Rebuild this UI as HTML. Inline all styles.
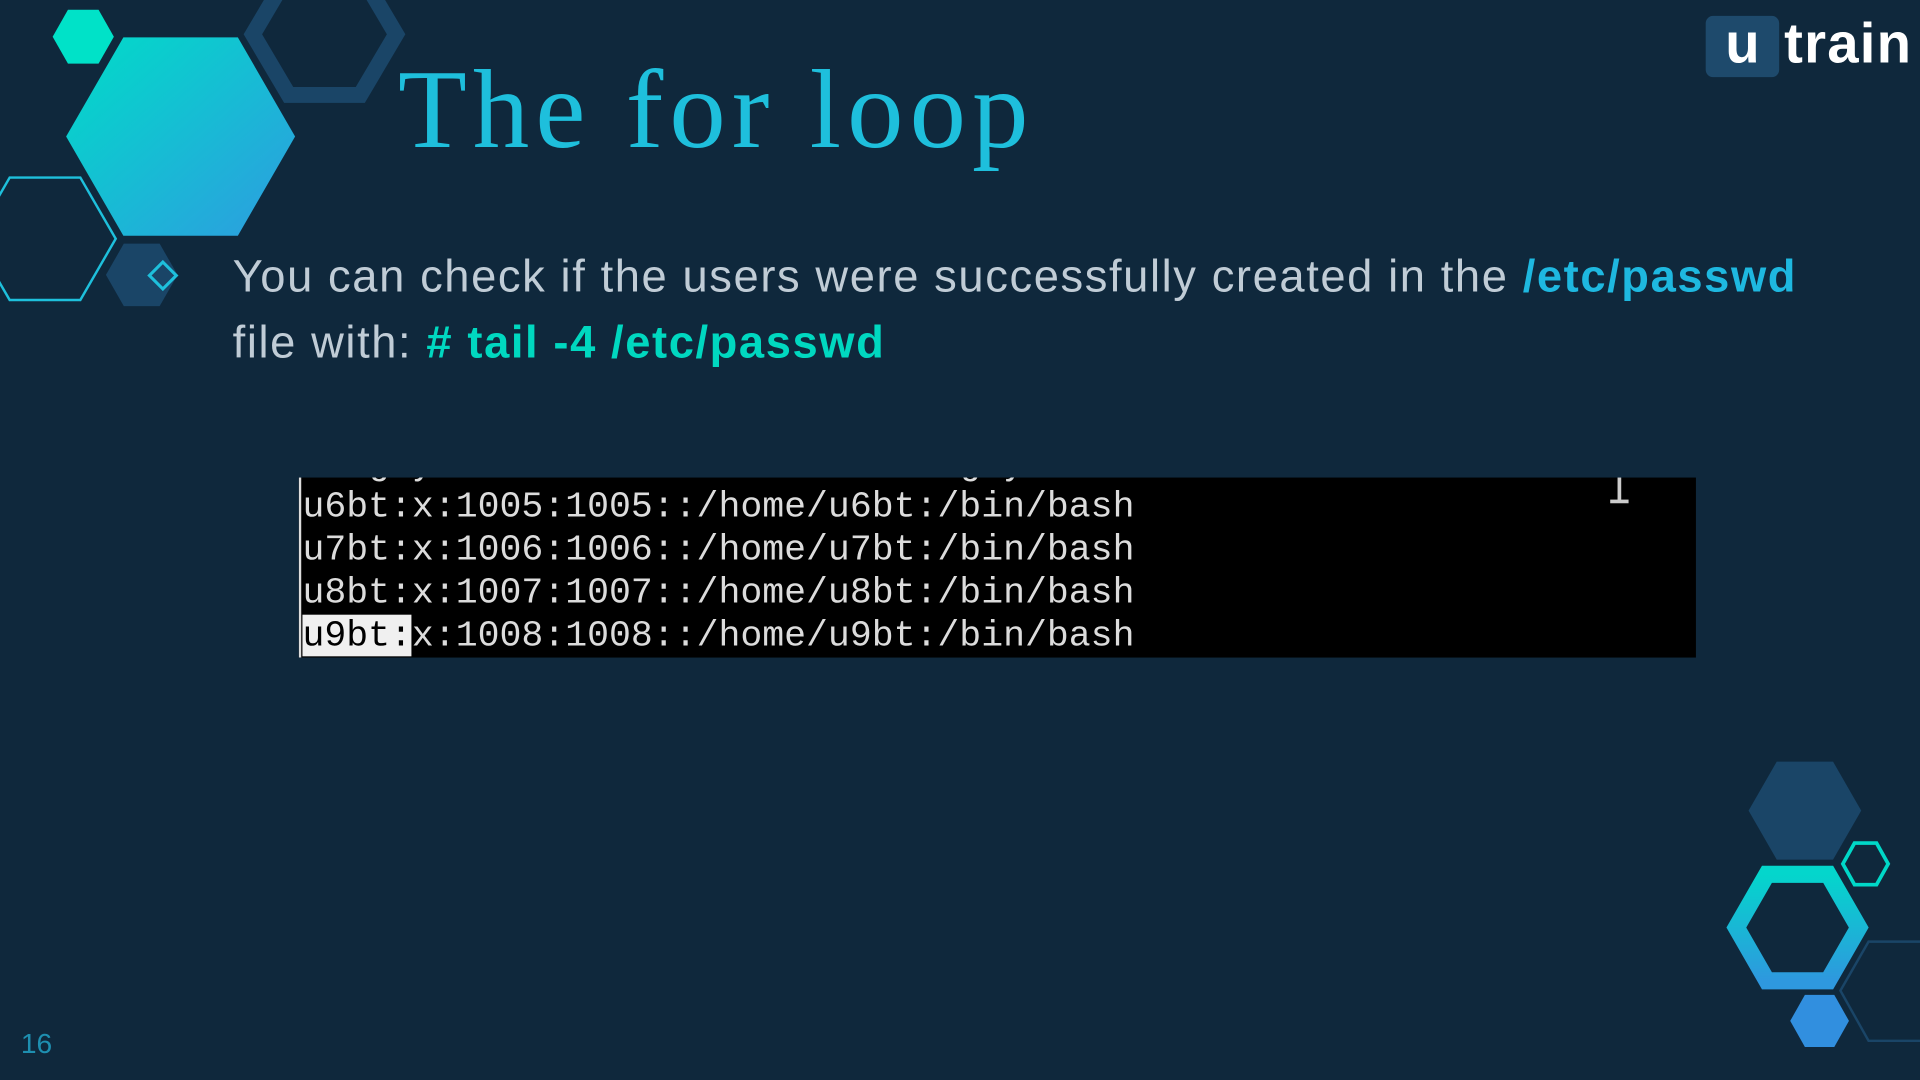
<!DOCTYPE html>
<html><head><meta charset="utf-8"><style>
html,body{margin:0;padding:0;background:#0f283c;overflow:hidden}
#s{position:absolute;left:0;top:0;width:1568px;height:882px;transform:scale(1.2244898);transform-origin:0 0;background:#0f283c;font-family:"Liberation Sans",sans-serif}
.t{position:absolute;white-space:nowrap}
</style></head><body><div id="s">
<svg width="1568" height="882" style="position:absolute;left:0;top:0">
<defs>
<linearGradient id="g1" x1="0" y1="0" x2="1" y2="1"><stop offset="0" stop-color="#00dcc8"/><stop offset="1" stop-color="#2e9ce0"/></linearGradient>
<linearGradient id="g2" x1="0" y1="0" x2="0" y2="1"><stop offset="0" stop-color="#04d6cc"/><stop offset="1" stop-color="#2e98de"/></linearGradient>
</defs>
<polygon points="43,30 55.5,8 80.5,8 93,30 80.5,52 55.5,52" fill="#00e2c8"/>
<polygon points="54,111.5 100.75,30.5 194.25,30.5 241,111.5 194.25,192.5 100.75,192.5" fill="url(#g1)"/>
<polygon points="206.5,28 235.75,-21.5 294.25,-21.5 323.5,28 294.25,77.5 235.75,77.5" fill="none" stroke="#1a4567" stroke-width="13"/>
<polygon points="-21,195 7.9,145 65.6,145 94.5,195 65.6,245 7.9,245" fill="none" stroke="#1ec0dc" stroke-width="2"/>
<polygon points="86.5,224.5 101.1,199 130.4,199 145,224.5 130.4,250 101.1,250" fill="#1a4567"/>
<polygon points="133,214 144,225 133,236 122,225" fill="none" stroke="#1ec0dc" stroke-width="2.5"/>
<polygon points="1428,662 1451,622 1497,622 1520,662 1497,702 1451,702" fill="#1a4567"/>
<polygon points="1505,705.5 1514.5,688.5 1532.5,688.5 1542,705.5 1532.5,722.5 1514.5,722.5" fill="none" stroke="#00d8c8" stroke-width="3"/>
<polygon points="1418,757.5 1443,714 1493,714 1518,757.5 1493,801 1443,801" fill="none" stroke="url(#g2)" stroke-width="14"/>
<polygon points="1462,833.75 1474,812.5 1498,812.5 1510,833.75 1498,855 1474,855" fill="#318fdf"/>
<polygon points="1503,809 1526,769 1572,769 1595,809 1572,850 1526,850" fill="none" stroke="#1a4567" stroke-width="2"/>
</svg>
<div class="t" style="left:325px;top:34px;font-family:'Liberation Serif',serif;font-size:92px;line-height:110px;color:#1ebfdc;letter-spacing:5px;font-weight:normal">The for loop</div>
<div class="t" style="left:190px;top:199px;font-size:37px;line-height:54px;color:#c0ccd6;letter-spacing:1.3px">You can check if the users were successfully created in the <b style="color:#1eb8e0">/etc/passwd</b><br>file with: <b style="color:#00d8c0"># tail -4 /etc/passwd</b></div>
<div style="position:absolute;left:244px;top:390px;width:1141px;height:147px;background:#000;overflow:hidden">
<div style="position:absolute;left:0;top:0;width:2px;height:147px;background:#ddd"></div>
<div style="position:absolute;left:3px;top:-28px;font-family:'Liberation Mono',monospace;font-size:29.8px;line-height:35px;color:#dcdcdc;white-space:pre">sergeyn:x:1004:1004::/home/sergeyn:/bin/bash
u6bt:x:1005:1005::/home/u6bt:/bin/bash
u7bt:x:1006:1006::/home/u7bt:/bin/bash
u8bt:x:1007:1007::/home/u8bt:/bin/bash
<span style="background:#f0f0f0;color:#000">u9bt:</span>x:1008:1008::/home/u9bt:/bin/bash</div>
<div style="position:absolute;left:1077px;top:0;width:3px;height:19px;background:#ccc"></div>
<div style="position:absolute;left:1071px;top:18px;width:15px;height:3px;background:#ccc"></div>
</div>
<div style="position:absolute;left:1393px;top:13px;width:60px;height:50px;background:#1e4a6c;border-radius:6px"></div>
<div class="t" style="left:1409px;top:7px;font-size:46px;font-weight:bold;color:#fff;line-height:56px">u</div>
<div class="t" style="left:1457px;top:7px;font-size:46px;font-weight:bold;color:#fff;line-height:56px;letter-spacing:1px">train</div>
<div class="t" style="left:17px;top:838px;font-size:23px;color:#1e8fb0;line-height:28px">16</div>
</div></body></html>
